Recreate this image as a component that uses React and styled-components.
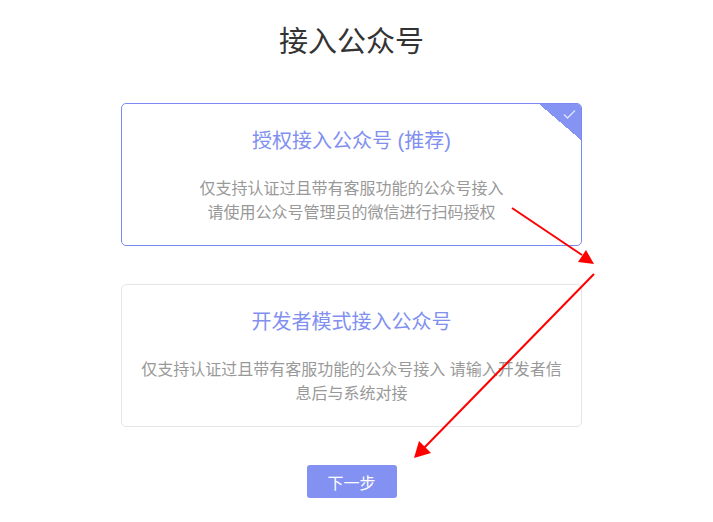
import React, { useState } from 'react';
import styled, { createGlobalStyle } from 'styled-components';

const GlobalStyle = createGlobalStyle`
  html, body {
    margin: 0;
    padding: 0;
    background: #fff;
  }
  body {
    font-family: "Liberation Sans", "Noto Sans CJK SC", sans-serif;
  }
`;

const Page = styled.div`
  position: relative;
  width: 703px;
  min-height: 522px;
  padding-top: 22px;
  box-sizing: border-box;
  display: flex;
  flex-direction: column;
  align-items: center;
`;

const Title = styled.h1`
  margin: 0 0 41px;
  font-size: 29px;
  line-height: 40px;
  font-weight: normal;
  color: #333;
`;

const CardList = styled.div`
  display: flex;
  flex-direction: column;
  gap: 38px;
`;

const Card = styled.div`
  position: relative;
  width: 461px;
  box-sizing: border-box;
  padding: 25px 16px 20px;
  border: 1px solid ${(p) => (p.$active ? '#7b8bf4' : '#e6e6e6')};
  border-radius: 5px;
  text-align: center;
  overflow: hidden;
  cursor: pointer;
  background: #fff;
`;

const CardTitle = styled.div`
  font-size: 20px;
  line-height: 24px;
  color: #8190f0;
`;

const CardDesc = styled.div`
  margin-top: 24px;
  font-size: 16px;
  line-height: 24px;
  color: #999;
`;

const Corner = styled.div`
  position: absolute;
  top: 0;
  right: 0;
  width: 42px;
  height: 36px;
  background: linear-gradient(to bottom left, #8594f2 50%, transparent 50%);

  svg {
    position: absolute;
    top: 6px;
    right: 5px;
  }
`;

const NextButton = styled.button`
  margin-top: 38px;
  width: 90px;
  height: 33px;
  border: none;
  border-radius: 3px;
  background: #8392f2;
  color: #fff;
  font-family: inherit;
  font-size: 16px;
  cursor: pointer;
`;

const Annotation = styled.svg`
  position: absolute;
  top: 0;
  left: 0;
  pointer-events: none;
`;

const options = [
  {
    title: '授权接入公众号 (推荐)',
    lines: ['仅支持认证过且带有客服功能的公众号接入', '请使用公众号管理员的微信进行扫码授权'],
  },
  {
    title: '开发者模式接入公众号',
    lines: ['仅支持认证过且带有客服功能的公众号接入 请输入开发者信息后与系统对接'],
  },
];

export default function App() {
  const [selected, setSelected] = useState(0);

  return (
    <>
      <GlobalStyle />
      <Page>
        <Title>接入公众号</Title>
        <CardList>
          {options.map((opt, i) => (
            <Card key={opt.title} $active={selected === i} onClick={() => setSelected(i)}>
              {selected === i && (
                <Corner>
                  <svg width="13" height="9" viewBox="0 0 13 9" fill="none">
                    <path d="M1 4.5l3.5 3.5 7.5-7.5" stroke="#dfe3ff" strokeWidth="1.3" />
                  </svg>
                </Corner>
              )}
              <CardTitle>{opt.title}</CardTitle>
              <CardDesc>
                {opt.lines.map((l) => (
                  <div key={l}>{l}</div>
                ))}
              </CardDesc>
            </Card>
          ))}
        </CardList>
        <NextButton>下一步</NextButton>

        <Annotation width="713" height="522" viewBox="0 0 713 522">
          <line x1="512" y1="208" x2="582" y2="255" stroke="#f00" strokeWidth="2" />
          <polygon points="594,264 578,262 586,250" fill="#f00" />
          <line x1="594" y1="274" x2="424" y2="448" stroke="#f00" strokeWidth="2" />
          <polygon points="414,458 419,441 431,453" fill="#f00" />
        </Annotation>
      </Page>
    </>
  );
}
